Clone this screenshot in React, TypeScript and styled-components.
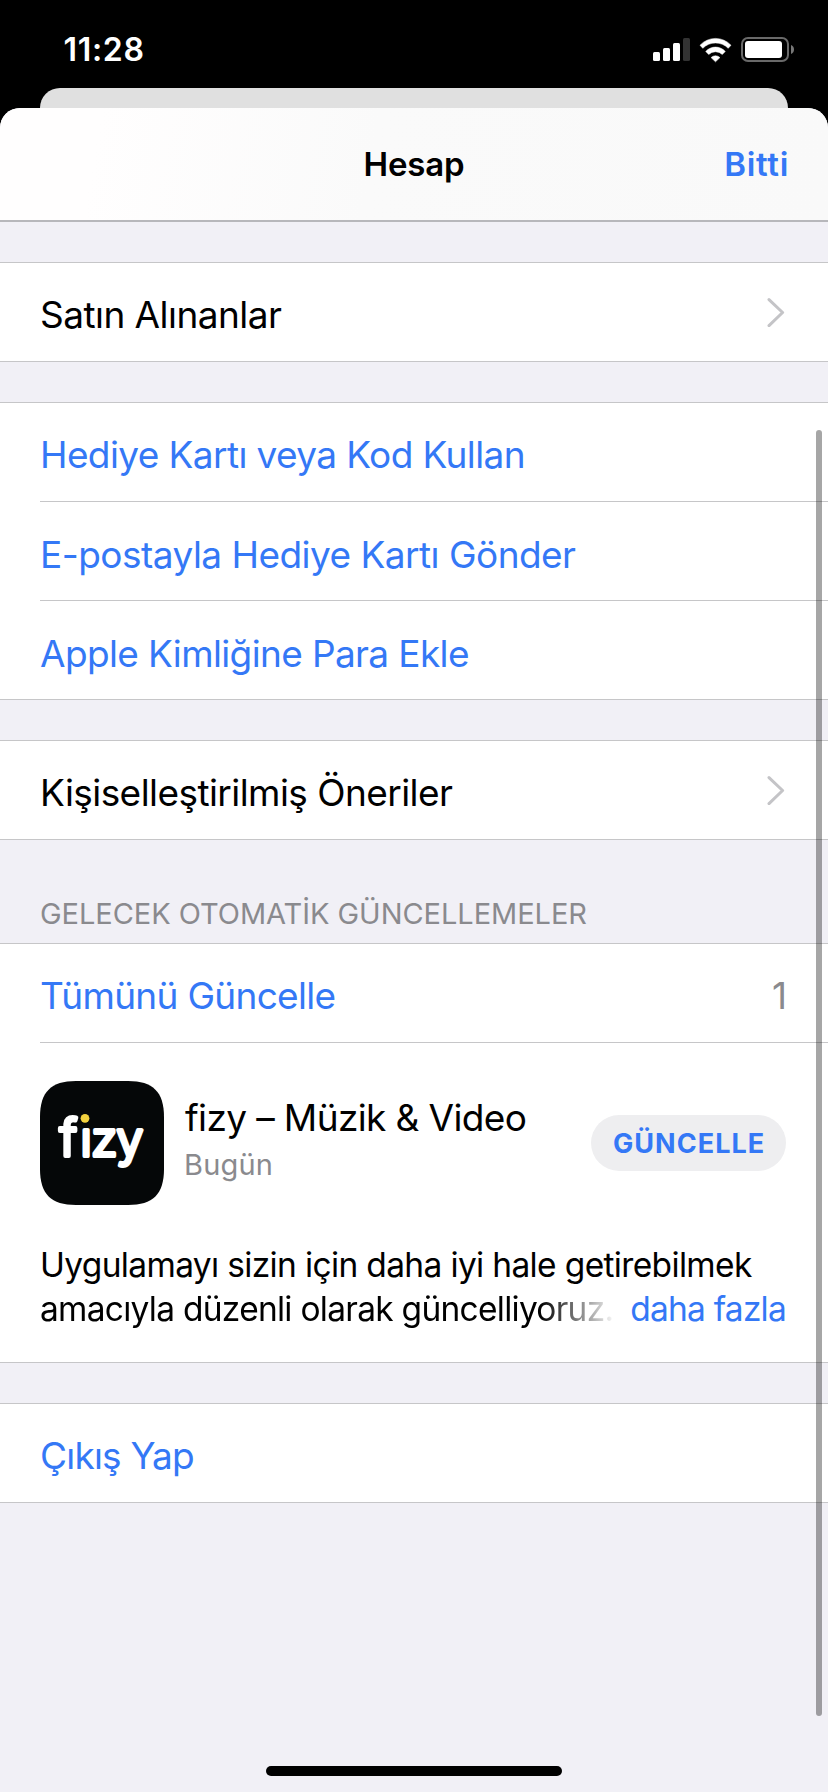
import React from 'react';
import styled, { createGlobalStyle } from 'styled-components';

const BLUE = '#3478f6';
const GRAY = '#8a8a8e';
const LINE = '#c6c6c8';
const GROUPED = '#f1f0f6';

const GlobalStyle = createGlobalStyle`
  * { box-sizing: border-box; }
  body {
    margin: 0;
    background: #000;
    font-family: Inter, "Liberation Sans", sans-serif;
    color: #000;
  }
`;

const Screen = styled.div`
  position: relative;
  display: flex;
  flex-direction: column;
  width: 828px;
  height: 1792px;
  overflow: hidden;
  background: #000;
`;

const StatusBar = styled.header`
  display: flex;
  align-items: center;
  justify-content: space-between;
  height: 88px;
  padding: 12px 34px 0 63.5px;
  flex: none;
`;

const Clock = styled.time`
  color: #fff;
  font-size: 32px;
  line-height: 40px;
  font-weight: 600;
  letter-spacing: 0.7px;
`;

const StatusIcons = styled.div`
  display: flex;
  align-items: center;
  gap: 9px;
`;

const BackCard = styled.div`
  flex: none;
  height: 60px;
  margin: 0 40px -40px;
  border-radius: 20px 20px 0 0;
  background: #e0e0e0;
`;

const Sheet = styled.main`
  position: relative;
  flex: 1;
  display: flex;
  flex-direction: column;
  overflow: hidden;
  border-radius: 20px 20px 0 0;
  background: ${GROUPED};
`;

const NavBar = styled.div`
  display: grid;
  grid-template-columns: 1fr auto 1fr;
  align-items: center;
  height: 114px;
  flex: none;
  padding: 0 40px;
  border-bottom: 2px solid #b7b7bb;
  background: linear-gradient(100deg, #fffefe 12%, #fafafa 45%, #f9f9f9);
`;

const NavTitle = styled.h1`
  grid-column: 2;
  margin: 0;
  font-size: 33px;
  line-height: 44px;
  font-weight: 600;
  letter-spacing: -0.15px;
`;

const NavAction = styled.button`
  grid-column: 3;
  justify-self: end;
  padding: 0;
  border: 0;
  background: none;
  color: ${BLUE};
  font: 600 33px/44px Inter, sans-serif;
  letter-spacing: 0.7px;
  margin-right: -1px;
`;

const Section = styled.section`
  flex: none;
  margin-top: 40px;
  border-top: 1px solid ${LINE};
  border-bottom: 1px solid ${LINE};
  background: #fff;

  h2 + & { margin-top: 0; }
`;

const SectionTitle = styled.h2`
  flex: none;
  margin: 0;
  height: 103px;
  padding: 54px 0 0 40px;
  color: ${GRAY};
  font-size: 29px;
  line-height: 40px;
  font-weight: 400;
  letter-spacing: -0.05px;
`;

const RowLabel = styled.span<{ $link?: boolean; $tracking?: number }>`
  padding-top: 5px;
  color: ${(p) => (p.$link ? BLUE : '#000')};
  font-size: 37px;
  line-height: 50px;
  letter-spacing: ${(p) => p.$tracking ?? -0.56}px;
  white-space: nowrap;
`;

const Row = styled.div`
  display: flex;
  align-items: center;
  justify-content: space-between;
  height: 98px;
  margin-left: 40px;
  padding-right: 43px;

  & + & {
    height: 99px;
    border-top: 1px solid ${LINE};
  }

  & + & ${RowLabel} { padding-top: 7px; }
`;

const Count = styled.span`
  padding-top: 5px;
  color: ${GRAY};
  font-size: 37px;
  line-height: 50px;
  margin-right: -2px;
`;

const Update = styled.article`
  margin-left: 40px;
  padding: 38px 42px 31px 0;
  border-top: 1px solid ${LINE};
`;

const AppHeader = styled.div`
  display: flex;
  height: 124px;
`;

const AppText = styled.div`
  flex: 1;
  padding: 12px 0 0 20px;
  white-space: nowrap;
`;

const AppName = styled.div`
  padding-left: 1px;
  font-size: 37px;
  line-height: 50px;
  letter-spacing: -0.62px;
`;

const AppDate = styled.div`
  margin-top: 4px;
  color: ${GRAY};
  font-size: 29px;
  line-height: 36px;
  letter-spacing: 0.16px;
`;

const UpdateButton = styled.button`
  align-self: center;
  width: 195px;
  height: 56px;
  padding: 2px 0 0 22px;
  border: 0;
  border-radius: 28px;
  background: #eeeef0;
  color: ${BLUE};
  font: 700 27px/54px Inter, sans-serif;
  letter-spacing: 1.03px;
  text-align: left;
`;

const Notes = styled.div`
  margin-top: 38px;
  font-size: 33.5px;
  line-height: 44px;
  white-space: nowrap;
`;

const NotesLine = styled.div`
  display: flex;
  justify-content: space-between;
  letter-spacing: -0.65px;
`;

const FadedText = styled.span`
  letter-spacing: -0.73px;
  mask-image: linear-gradient(90deg, #000 500px, transparent 576px);
`;

const MoreLink = styled.a`
  color: ${BLUE};
  letter-spacing: -0.77px;
`;

const HomeIndicator = styled.div`
  flex: none;
  align-self: center;
  width: 296px;
  height: 10px;
  margin: auto 0 16px;
  border-radius: 5px;
  background: #000;
`;

const ScrollThumb = styled.div`
  position: absolute;
  top: 430px;
  right: 6px;
  width: 6px;
  height: 1286px;
  border-radius: 3px;
  background: rgba(0, 0, 0, 0.35);
`;

const Signal = () => (
  <svg width="37" height="26" viewBox="0 0 37 26">
    <rect x="0" y="15" width="7" height="9" rx="1.5" fill="#fff" />
    <rect x="10" y="11" width="7" height="13" rx="1.5" fill="#fff" />
    <rect x="20" y="6" width="7" height="18" rx="1.5" fill="#fff" />
    <rect x="30" y="1" width="7" height="23" rx="1.5" fill="#333" />
  </svg>
);

const Wifi = () => (
  <svg width="33" height="26" viewBox="0 0 33.4 26" fill="#fff" stroke="#fff" strokeWidth=".5" strokeLinejoin="round">
    <path d="M1 8.2A21.2 21.2 0 0 1 32.4 8.2L29.6 11.3A18.1 18.1 0 0 0 3.8 11.3Z" />
    <path d="M6.8 14.4A13.4 13.4 0 0 1 26.6 14.4L23.6 17.5A10.1 10.1 0 0 0 9.8 17.5Z" />
    <path d="M12.2 20.7A6.3 6.3 0 0 1 21.2 20.7L16.7 25Z" />
  </svg>
);

const Battery = () => (
  <svg width="53" height="26" viewBox="0 0 53 26">
    <rect x="1" y="1" width="46" height="23" rx="6" fill="none" stroke="#696969" strokeWidth="2" />
    <rect x="4" y="4" width="37" height="17" rx="3" fill="#fff" />
    <path d="M50 8C52 8.8 53 10.3 53 12.5S52 16.2 50 17Z" fill="#777" />
  </svg>
);

const Chevron = () => (
  <svg width="18" height="30" viewBox="0 0 18 30" fill="none" stroke="#c4c4c7" strokeWidth="3" strokeLinecap="round" strokeLinejoin="round">
    <path d="M2 2.6 15.6 15.5 2 28.6" />
  </svg>
);

const FizyIcon = () => (
  <svg width="124" height="124" viewBox="0 0 124 124">
    <path
      d="M0 36C0 11 11 0 36 0H88C113 0 124 11 124 36V88C124 113 113 124 88 124H36C11 124 0 113 0 88Z"
      fill="#050708"
    />
    <g
      fill="#fff"
      stroke="#fff"
      strokeWidth="4"
      strokeLinejoin="round"
      fontFamily="Inter, sans-serif"
      fontWeight="300"
    >
      <text x="19.6" y="75.3" fontSize="51">f</text>
      <text x="40.4 51.2 76.4" y="75.3" fontSize="48">ızy</text>
    </g>
    <circle cx="45" cy="37.3" r="4.4" fill="#f2d13e" />
  </svg>
);

export default function App() {
  return (
    <Screen>
      <GlobalStyle />
      <StatusBar>
        <Clock>11:28</Clock>
        <StatusIcons>
          <Signal />
          <Wifi />
          <Battery />
        </StatusIcons>
      </StatusBar>
      <BackCard />
      <Sheet>
        <NavBar>
          <NavTitle>Hesap</NavTitle>
          <NavAction>Bitti</NavAction>
        </NavBar>

        <Section>
          <Row>
            <RowLabel $tracking={-0.54}>Satın Alınanlar</RowLabel>
            <Chevron />
          </Row>
        </Section>

        <Section>
          <Row>
            <RowLabel $link $tracking={-0.6}>Hediye Kartı veya Kod Kullan</RowLabel>
          </Row>
          <Row>
            <RowLabel $link $tracking={-0.53}>E-postayla Hediye Kartı Gönder</RowLabel>
          </Row>
          <Row>
            <RowLabel $link $tracking={-0.63}>Apple Kimliğine Para Ekle</RowLabel>
          </Row>
        </Section>

        <Section>
          <Row>
            <RowLabel>Kişiselleştirilmiş Öneriler</RowLabel>
            <Chevron />
          </Row>
        </Section>

        <SectionTitle>GELECEK OTOMATİK GÜNCELLEMELER</SectionTitle>
        <Section>
          <Row>
            <RowLabel $link $tracking={-0.7}>Tümünü Güncelle</RowLabel>
            <Count>1</Count>
          </Row>
          <Update>
            <AppHeader>
              <FizyIcon />
              <AppText>
                <AppName>fizy – Müzik &amp; Video</AppName>
                <AppDate>Bugün</AppDate>
              </AppText>
              <UpdateButton>GÜNCELLE</UpdateButton>
            </AppHeader>
            <Notes>
              <NotesLine>Uygulamayı sizin için daha iyi hale getirebilmek</NotesLine>
              <NotesLine>
                <FadedText>amacıyla düzenli olarak güncelliyoruz.</FadedText>
                <MoreLink>daha fazla</MoreLink>
              </NotesLine>
            </Notes>
          </Update>
        </Section>

        <Section>
          <Row>
            <RowLabel $link $tracking={-0.8}>Çıkış Yap</RowLabel>
          </Row>
        </Section>

        <HomeIndicator />
      </Sheet>
      <ScrollThumb />
    </Screen>
  );
}
